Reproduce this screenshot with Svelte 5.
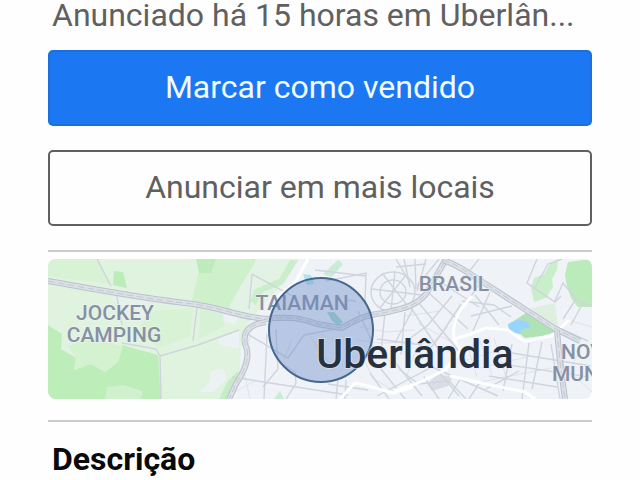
<script lang="ts">
  const postedAt = 'Anunciado há 15 horas em Uberlân...';

  // Streets that fan out of the city centre, thin grey
  const streets = [
    'M49 0 L63 27',
    'M68 33 L74 66',
    'M149 48 L145 82',
    'M74 84 L108 90 L112 97 L150 86 L191 71',
    'M112 97 L113 140',
    'M204 15 L201 50 M204 15 L248 39',
    'M196 73 L240 99 L256 76 L298 68',
    'M219 75 L216 140 M228 70 L230 110 L215 128',
    'M231 103 L247 113 L248 124 L238 140',
    'M184 118 L235 126 L300 136',
    'M278 22 L318 14 L317 44 M267 11 L318 17',
    'M298 41 L308 42 M310 52 L322 78 L326 92',
    'M324 30 L374 36 M334 14 L362 50 M358 16 L332 49 M347 12 L343 52',
    'M348 0 L362 24 M356 0 L362 28 M367 0 L368 30 M378 0 L369 32 M348 8 L378 5',
    'M391 0 L369 27 M431 0 L412 24',
    'M370 43 L410 91 M363 49 L393 94 M381 34 L420 70 M391 22 L431 48',
    'M337 53 L333 93 M357 53 L353 96 M365 50 L347 84 M329 80 L374 86',
    'M404 37 L380 66 L360 81 M413 45 L392 77 L374 100',
    'M431 25 L406 63 M442 33 L425 72 M414 42 L446 46 L463 58',
    'M423 57 L464 47 M427 36 L451 66',
    'M464 94 L543 107 M454 105 L541 118 M441 117 L509 128',
    'M481 84 L474 140 M494 83 L484 130 M464 85 L455 132',
    'M489 0 L479 24 L507 43 L513 37 M486 30 L500 5 L514 0',
    'M507 42 L515 24 L529 41 L544 47 M515 60 L528 40 M523 66 L535 44',
    'M513 70 L540 82 M514 89 L518 140 M503 85 L512 140',
    'M280 125 L320 131 M290 120 L288 140 M298 121 L297 140',
    'M322 114 L341 140 M333 110 L357 140 M346 102 L374 137',
    'M329 137 L384 108 L450 137 M360 126 L401 122 L418 140',
    'M376 118 L391 140 M391 113 L411 137 M351 110 L369 124',
    'M413 119 L400 140 M432 123 L421 140 M471 112 L438 130',
  ];

  const fineStreets = [
    'M358 57 L392 52 M375 92 L400 68 M370 64 L405 84',
    'M275 66 L274 92 L285 112 M262 76 L277 101 M244 80 L236 101',
    'M312 68 L339 73 L366 71 M310 81 L331 84 L365 83',
    'M313 94 L325 119 L346 132 M331 91 L347 108 M369 88 L359 116',
    'M420 88 L429 118 M432 82 L444 116 M446 79 L459 121',
    'M419 101 L461 88 M428 110 L483 97 M433 123 L503 109',
    'M208 121 L185 134 M196 113 L202 140 M205 65 L194 108',
    'M524 62 L544 68 M530 95 L521 112 L544 133',
  ];

  // Roads wide enough for a casing and a dashed centre line
  const highways = [
    'M0 22 C45 30 91 39 145 45 C174 49 188 57 218 60',
    'M218 60 C239 57 253 59 269 65 L294 69 C307 61 317 56 335 54 C353 50 367 48 378 35 L398 0',
    'M218 63 C199 66 195 74 197 85 C204 98 195 114 188 125 L181 140',
    'M395 1 C412 6 422 16 441 27 L506 69 L532 82',
    'M509 72 L512 103 L517 140',
  ];
</script>

<svelte:head>
  <title>Anúncio</title>
</svelte:head>

<main class="listing">
  <p class="posted">{postedAt}</p>

  <div class="actions">
    <button type="button" class="btn primary">Marcar como vendido</button>
    <button type="button" class="btn outline">Anunciar em mais locais</button>
  </div>

  <section class="location">
    <svg class="map" viewBox="0 0 544 140" preserveAspectRatio="xMidYMid slice" role="img" aria-label="Mapa de Uberlândia">
      <rect width="544" height="140" fill="#eff2f7" />

      <!-- Countryside -->
      <path d="M0 0 H251 L232 28 L218 42 L200 65 L193 81 L192 113 L177 140 H0 Z" fill="#dff3df" />
      <path d="M0 0 H50 L63 25 L0 17 Z" fill="#d8f2d5" />
      <path d="M154 0 H209 L189 36 L181 54 L143 45 Z" fill="#cef0cb" />
      <path d="M209 0 H251 L237 24 L216 38 L201 54 L181 48 L192 28 Z" fill="#e2f3e5" />
      <path d="M242 1 L250 1 L235 25 L215 33 L208 46 L202 42 L207 30 L231 20 Z" fill="#c9eec9" />
      <path d="M0 66 L14 75 L13 90 L28 99 L26 111 L43 105 L57 113 L70 101 L74 86 L110 96 L113 140 H0 Z" fill="#bdedb9" />
      <path d="M20 87 L45 78 L75 88 L70 103 L58 113 L43 105 L26 111 L28 99 Z" fill="#d4f1d0" />
      <path d="M57 140 L59 128 L76 126 L95 132 L93 140 Z" fill="#d1f0cd" />
      <path d="M66 12 L75 13 L79 29 L65 26 Z M148 0 H168 L163 14 L151 14 Z" fill="#bdebb9" />
      <path d="M100 53 L145 49 L142 77 L111 89 L91 72 Z" fill="#d7f2d5" />
      <path d="M152 50 L174 52 L176 67 L151 80 Z" fill="#d7f1d6" />
      <path d="M63 37 L101 43 L97 57 L79 63 L72 54 Z" fill="#e6f1eb" />
      <path d="M171 80 L191 71 V90 L178 88 L170 84 Z M163 112 L176 110 L179 120 L165 133 H151 L161 124 Z M175 53 L191 58 L187 65 L176 62 Z" fill="#ecf2f3" />
      <path d="M171 140 L180 122 L190 112 L189 123 L181 140 Z" fill="#c7ebc7" />

      <!-- Parks and water -->
      <path d="M275 15 L290 1 L295 5 L284 18 Z M226 140 L232 132 L236 140 Z" fill="#c9ecd5" />
      <path d="M483 29 L486 19 L496 15 L502 5 L510 0 L509 11 L504 20 L505 28 L498 39 L486 43 Z" fill="#c9efca" />
      <path d="M517 16 L520 3 L544 0 V48 L530 48 L523 39 L519 27 Z" fill="#bcebbb" />
      <path d="M483 49 L507 44 L510 67 L493 60 Z" fill="#deefdf" />
      <path d="M461 65 L478 54 L504 68 L507 73 L494 77 L477 79 L471 74 Z" fill="#afe3b4" />
      <path d="M460 65 L469 61 L479 62 L483 68 L473 71 L472 75 L461 73 Z" fill="#99d4ff" />
      <path d="M255 15 L263 16 L266 25 L259 26 Z" fill="#afe4ee" />
      <path d="M279 53 L286 53 L295 63 L291 67 L284 62 Z" fill="#9fdccb" />
      <path d="M379 125 L390 115 L405 118 L400 127 L384 132 Z" fill="#dadde6" />

      {#each fineStreets as d}
        <path class="fine" {d} />
      {/each}
      {#each streets as d}
        <path class="street" {d} />
      {/each}
      <ellipse class="street" cx="345" cy="33" rx="22" ry="20" />
      <ellipse class="street" cx="345" cy="33" rx="13" ry="12" />

      <!-- Avenues -->
      <path class="avenue" d="M260 0 L247 24 L226 41" />
      <path class="avenue" d="M424 37 C409 54 404 63 406 80 L420 76 L438 69 L460 71 L476 82 L504 77 L521 61" />
      <path class="avenue" d="M406 80 L413 91 L397 111 L370 124 L346 132" />
      <path class="avenue" d="M292 140 L307 124 L320 127 L345 134 L365 128" />
      <path class="avenue" d="M402 117 L438 125 L477 133 L487 140" />

      {#each highways as d}
        <path class="casing" {d} />
        <path class="lane" {d} />
        <path class="median" {d} />
      {/each}

      <g>
        <text x="67" y="61" class="hood">JOCKEY</text>
        <text x="66" y="83" class="hood">CAMPING</text>
        <text x="254" y="51" class="hood">TAIAMAN</text>
        <text x="406" y="32" class="hood">BRASIL</text>
        <text x="513" y="100" class="hood start">NOVO</text>
        <text x="504" y="122" class="hood start">MUNDO</text>
      </g>

      <circle class="area" cx="273" cy="71" r="52" />
      <text x="367" y="109" class="city">Uberlândia</text>
    </svg>
  </section>

  <section class="description">
    <h2>Descrição</h2>
  </section>
</main>

<style>
  :global(body) {
    margin: 0;
    background: #fefefe;
  }

  .listing {
    padding: 0 48px;
    font-family: Roboto, 'Liberation Sans', sans-serif;
    color: #606060;
  }

  .posted {
    margin: 0;
    padding: 0 4px;
    font-size: 32px;
    line-height: 30px;
    white-space: nowrap;
  }

  .actions {
    display: flex;
    flex-direction: column;
    gap: 24px;
    padding: 20px 0 24px;
  }

  .btn {
    box-sizing: border-box;
    width: 100%;
    height: 76px;
    padding: 0 16px 2px;
    border: 2px solid #606060;
    border-radius: 5px;
    background: #fefefe;
    color: #606060;
    font-family: inherit;
    font-size: 32px;
    line-height: 36px;
    cursor: pointer;
  }

  .primary {
    border-color: #1b6fe0;
    background: #1b77f2;
    color: #f2fbff;
  }

  .location {
    padding: 7px 0 21px;
    border-top: 2px solid #cbcbcb;
  }

  .map {
    display: block;
    width: 100%;
    height: 140px;
    border-radius: 8px;
  }

  .street,
  .fine {
    fill: none;
    stroke: #d0d4de;
    stroke-width: 1.4;
  }

  .fine {
    stroke: #dfe2ea;
    stroke-width: 1;
  }

  .avenue {
    fill: none;
    stroke: #fff;
    stroke-width: 3;
    stroke-linejoin: round;
  }

  .casing,
  .lane,
  .median {
    fill: none;
    stroke: #bcc1cd;
    stroke-width: 6;
    stroke-linejoin: round;
  }

  .lane {
    stroke: #dbe1e6;
    stroke-width: 4;
  }

  .median {
    stroke: #c4c8d3;
    stroke-width: 1;
    stroke-dasharray: 7 3;
  }

  .area {
    fill: #6b8cc8;
    fill-opacity: 0.42;
    stroke: #45688f;
    stroke-width: 2;
  }

  .hood {
    fill: #8790a3;
    stroke: #eef3f4;
    stroke-width: 2px;
    stroke-opacity: 0.6;
    paint-order: stroke;
    font-size: 21px;
    font-weight: 500;
    text-anchor: middle;
  }

  .start {
    text-anchor: start;
  }

  .city {
    fill: #28313e;
    stroke: #eef1f6;
    stroke-opacity: 0.5;
    stroke-width: 2px;
    paint-order: stroke;
    font-size: 41px;
    font-weight: 500;
    text-anchor: middle;
  }

  .description {
    padding: 19px 4px 0;
    border-top: 2px solid #cbcbcb;
  }

  h2 {
    margin: 0;
    color: #0a0a0a;
    font-size: 32px;
    font-weight: 700;
    line-height: 36px;
  }
</style>
